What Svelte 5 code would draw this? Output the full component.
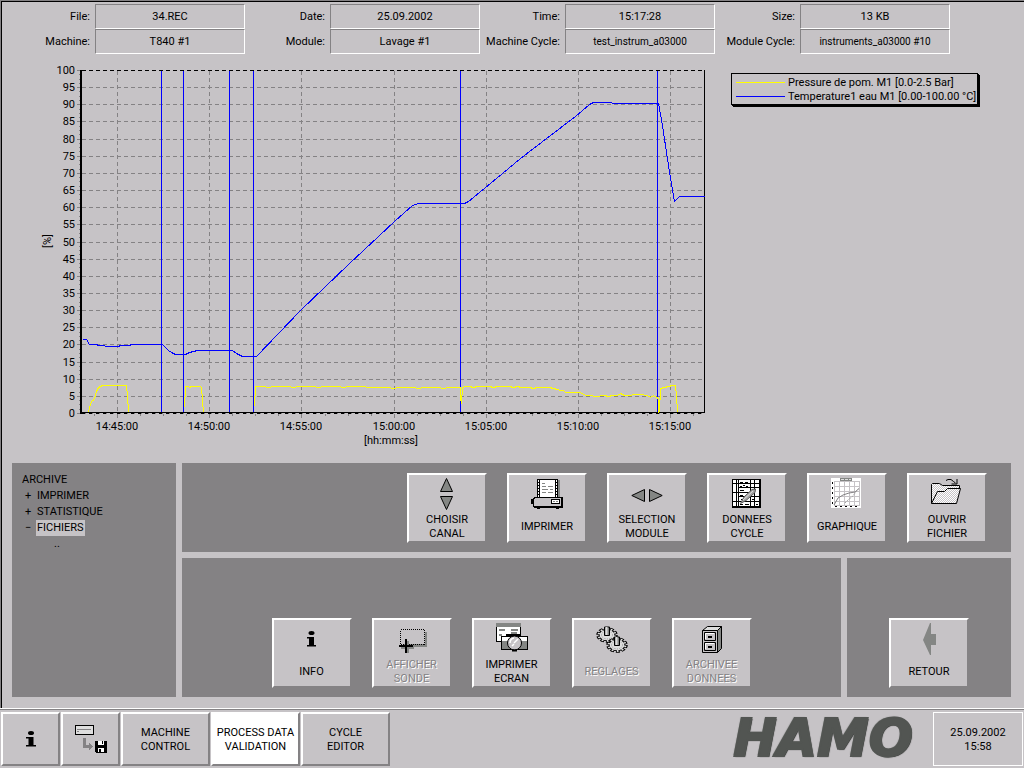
<script>
  const fields = [
    { id: 'file', label: 'File:', value: '34.REC' },
    { id: 'date', label: 'Date:', value: '25.09.2002' },
    { id: 'time', label: 'Time:', value: '15:17:28' },
    { id: 'size', label: 'Size:', value: '13 KB' },
    { id: 'machine', label: 'Machine:', value: 'T840 #1' },
    { id: 'module', label: 'Module:', value: 'Lavage #1' },
    { id: 'mcycle', label: 'Machine Cycle:', value: 'test_instrum_a03000', small: true },
    { id: 'modcycle', label: 'Module Cycle:', value: 'instruments_a03000 #10', small: true }
  ];

  const channels = [
    { color: '#ffff00', name: 'Pressure de pom. M1 [0.0-2.5 Bar]' },
    { color: '#0000ff', name: 'Temperature1 eau M1 [0.00-100.00 °C]' }
  ];

  // Percent scale: 0 % sits at y = 413, 100 % at y = 70.
  const yOf = (v) => Math.round(413 - v * 3.43) + 0.5;
  const percents = Array.from({ length: 21 }, (_, i) => i * 5);
  const minorPercents = Array.from({ length: 81 }, (_, i) => i * 1.25);
  const times = [
    ['14:45:00', 117], ['14:50:00', 209], ['14:55:00', 301], ['15:00:00', 394],
    ['15:05:00', 486], ['15:10:00', 578], ['15:15:00', 670]
  ];
  const minorTimes = Array.from({ length: 27 }, (_, i) => 94 + Math.round(i * 23.05));
  const phases = [161, 183, 229, 253, 460, 657];

  const temperature =
    '82,339 86,339 89,344 96,344 98,345 103,345 106,346 117,346 121,345 128,345 132,344 162,344 165,347 168,350 171,352 175,354 185,354 189,352 193,351 197,350 232,350 236,353 242,356 256,356 300,310 348,264 394,221 412,205 418,203 464,203 468,201 490,183 520,158 550,135 575,116 589,104 593,102 611,102 612,103 658,103 662,125 666,152 670,178 674,201 676,199 679,196 704,196';

  const jitter = (from, to, step, base) => {
    let out = '';
    for (let x = from, i = 0; x <= to; x += step, i++) out += `${x},${base(x) + (i % 5 === 2 ? 1 : 0)} `;
    return out;
  };
  const pressure = [
    '88,412 90,403 92,400 94,399 96,391 98,387 100,386 102,385 126,385 127,395 128,412',
    '184,407 185,386 188,386 189,387 191,386 200,386 201,387 202,400 203,412',
    '254,406 255,386 ' +
      jitter(258, 458, 5, (x) => (x < 370 ? 386 : 387)) +
      '460,387 460,398 461,403 462,387 ' +
      jitter(465, 553, 4, (x) => (x < 520 ? 386 : 387)) +
      '557,389 560,390 563,390 565,392 580,392 585,395 590,395 595,396 604,395 608,396 612,395 617,395 620,393 624,395 640,394 647,395 650,397 653,395 656,397 658,398 658,412',
    '659,412 660,388 664,387 668,386 672,385 675,385 676,395 677,412'
  ];

  const channelActions = [
    { icon: 'updown', lines: ['CHOISIR', 'CANAL'] },
    { icon: 'printer', lines: ['IMPRIMER'] },
    { icon: 'leftright', lines: ['SELECTION', 'MODULE'] },
    { icon: 'table', lines: ['DONNEES', 'CYCLE'] },
    { icon: 'graph', lines: ['GRAPHIQUE'] },
    { icon: 'folder', lines: ['OUVRIR', 'FICHIER'] }
  ];
  const toolActions = [
    { icon: 'info', lines: ['INFO'] },
    { icon: 'probe', lines: ['AFFICHER', 'SONDE'], disabled: true },
    { icon: 'camera', lines: ['IMPRIMER', 'ECRAN'] },
    { icon: 'gears', lines: ['REGLAGES'], disabled: true },
    { icon: 'cabinet', lines: ['ARCHIVEE', 'DONNEES'], disabled: true }
  ];
  const backActions = [{ icon: 'back', lines: ['RETOUR'] }];
</script>

{#snippet gear(cx, cy)}
  <g transform="translate({cx} {cy}) scale(1 .72)" fill="none">
    <circle r="8.500" stroke="#000" stroke-width="4.500" stroke-dasharray="3.6 1.74" />
    <circle r="8" fill="#dedede" stroke="#000" stroke-width="1.200" />
    <circle r="8.300" stroke="#dedede" stroke-width="2.500" stroke-dasharray="1.8 3.415" stroke-dashoffset="-.9" />
    <circle r="5.500" stroke="#848684" stroke-dasharray="1 1.5" />
  </g>
  <path d="M{cx - 2.5} {cy + 0.5}V{cy - 8}H{cx + 2.5}V{cy + 0.5}Z" fill="#848684" stroke="#000" />
  <path d="M{cx - 0.5} {cy}V{cy - 8}" stroke="#dedede" stroke-width="2" />
{/snippet}

{#snippet glyph(name)}
  <svg class="icon" viewBox="0 0 32 35" width="32" height="35" aria-hidden="true">
    {#if name === 'updown'}
      <g fill="#848684" stroke="#000">
        <path d="M15.5 1.5L21.5 14.5H9.5Z" />
        <path d="M15.5 32.5L21.5 19.5H9.5Z" />
      </g>
    {:else if name === 'leftright'}
      <g fill="#848684" stroke="#000">
        <path d="M.8 18.5L13.5 12.5V24.5Z" />
        <path d="M31.2 18.5L18.5 12.5V24.5Z" />
      </g>
    {:else if name === 'printer'}
      <g shape-rendering="crispEdges">
        <path d="M9 3H29V20H9Z" fill="#848684" />
        <path d="M6 2H27V20H6Z" fill="#000" />
        <path d="M9 3H24V20H9Z" fill="#fff" />
        <path d="M7.5 3V20M25.5 3V20" stroke="#fff" stroke-dasharray="2 1" />
        <path d="M11 6.5h3M11 9.5h4M17 9.5h5M11 12.5h6M19 12.5h3M11 15.5h4M17 15.5h5" stroke="#848684" fill="none" />
        <path d="M3 20H31L32 21V30L31 31H3L2 30V21Z" fill="#000" />
        <path d="M4 21H30V29H3V22Z" fill="#c6c3c6" />
        <path d="M0 22H2V27H0ZM6 31H9V32H6ZM25 31H28V32H25Z" fill="#000" />
        <path d="M20 22H29V27H20Z" fill="#000" />
        <path d="M21 23H28V26H21Z" fill="#fff" />
        <path d="M22 24.5h2M25 24.5h2" stroke="#848684" />
      </g>
    {:else if name === 'table'}
      <g shape-rendering="crispEdges">
        <path d="M1 2H30V31H1Z" fill="#000" />
        <path d="M2 3H5V29H2ZM6 3H7V29H6ZM8 3H19V29H8ZM20 3H23V29H20ZM24 3H28V29H24Z" fill="#fff" />
        <path d="M2 6.5H28M8 10.5H28M2 15.5H19M8 19.5H28M2 24.5H28" stroke="#000" />
        <path d="M9 5.5h3M14 5.5h3M9 9.5h2M12 8.5h2M15 9.5h2M9 13.5h4M9 18.5h3M10 22.5h2M9 27.5h3M14 27.5h4M21 22.5h2M25 27.5h2" stroke="#000" />
      </g>
      <path d="M9.500 26.500L13 20L21 12.500L24.500 12L24 15.500L15 23.500Z" fill="#a5a5a5" stroke="#5a5a5a" />
      <path d="M12 23L22 14" stroke="#dedede" />
    {:else if name === 'graph'}
      <g shape-rendering="crispEdges">
        <path d="M0 1H30V31H0Z" fill="#fff" />
        <path d="M3.500 4V29M8.500 4V29M13.500 4V29M18.500 4V29M23.500 4V29M28.500 4V29M3 4.500H29M3 9.500H29M3 14.500H29M3 19.500H29M3 24.500H29M3 28.500H29" stroke="#c6c3c6" />
        <path d="M1.500 5V29" stroke="#000" stroke-dasharray="2 3" />
        <path d="M4 29.500H29" stroke="#000" stroke-dasharray="2 3" />
        <path d="M9.500 1.500H20.500V3.500H9.500ZM13.500 1V3M17.500 1V3" stroke="#848684" fill="#dedede" />
      </g>
      <path d="M3 28L7 21L12 18L18 16L24 15L28 11.500" stroke="#848284" fill="none" />
      <path d="M14 26L18 22L21 20L28 11" stroke="#a5a5a5" stroke-dasharray="2 1" fill="none" />
    {:else if name === 'folder'}
      <defs>
        <pattern id="dither" width="2" height="2" patternUnits="userSpaceOnUse">
          <path d="M0 0h2v2h-2z" fill="#c6c3c6" />
          <path d="M0 0h1v1h-1zM1 1h1v1h-1z" fill="#fff" />
        </pattern>
      </defs>
      <path d="M.5 26.500V7.500L1.500 6.500H8.500L11.500 8.500H28.500V12" fill="url(#dither)" stroke="#000" />
      <path d="M.5 26.500L6.500 14.500H13.500L16.500 11.500H29.500L25.500 26.500Z" fill="url(#dither)" stroke="#000" />
      <path d="M15 3.500L17 2.500H20L22.500 4.500L24.500 6" fill="none" stroke="#000" />
      <path d="M26 2V7H20.500" fill="none" stroke="#000" />
    {:else if name === 'info'}
      <ellipse cx="15.500" cy="11" rx="3" ry="2" />
      <path d="M11 15H18V23H20V24.500H11V23H13V16.500H11Z" />
    {:else if name === 'probe'}
      <g shape-rendering="crispEdges">
        <path d="M7 10H31V25H7Z" fill="#848684" />
        <path d="M4 7H29V22H4Z" fill="#c6c3c6" />
        <path d="M4.500 7.500H28.500V22.500H4.500Z" fill="none" stroke="#000" stroke-dasharray="1 1" />
        <path d="M12 19V31M5 26H18" stroke="#848684" stroke-width="2" />
        <path d="M10 17V31M3 24H17" stroke="#000" stroke-width="2" />
      </g>
    {:else if name === 'camera'}
      <g shape-rendering="crispEdges">
        <path d="M0 1H25V20H0Z" fill="#000" />
        <path d="M1 5H24V19H1Z" fill="#fff" />
        <path d="M0 1H25V5H0Z" fill="#848684" />
        <path d="M3 8h6M15 8h7M3 13h3M15 11h6" stroke="#848684" stroke-width="2" />
        <path d="M5 14H10V12H24V14H32V28H5Z" fill="#000" />
        <path d="M6 15H31V19H6Z" fill="#fff" />
        <path d="M6 19H31V27H6Z" fill="#848684" />
      </g>
      <circle cx="18.500" cy="21" r="7" fill="#c6c3c6" stroke="#000" />
      <path d="M14 21A5 5 0 0 1 18 16M18 21L22 17M16 24L18 22" stroke="#fff" fill="none" stroke-width="1.500" />
      <path d="M16 28.500H21" stroke="#000" stroke-width="2" />
    {:else if name === 'gears'}
      {@render gear(11, 13)}
      {@render gear(21, 23)}
    {:else if name === 'cabinet'}
      <path d="M6.500 8.500L11.500 4.500H25.500L21.500 8.500Z" fill="#dedede" stroke="#000" />
      <path d="M21.500 8.500L25.500 4.500V26.500L21.500 30.500Z" fill="#848684" stroke="#000" />
      <path d="M6.500 8.500H21.500V30.500H6.500Z" fill="#c6c3c6" stroke="#000" />
      <path d="M8.500 10.500H19.500V18.500H8.500ZM8.500 20.500H19.500V28.500H8.500Z" fill="#c6c3c6" stroke="#000" />
      <path d="M9.500 17V11.500H18M9.500 27V21.500H18" fill="none" stroke="#fff" />
      <path d="M12 14H16V16H12ZM12 24H16V26H12Z" />
    {:else if name === 'back'}
      <path d="M10 18L17 1H18V12H23V23H18V33H17Z" fill="#848684" />
    {/if}
  </svg>
{/snippet}

{#snippet action(a)}
  <button class="action" type="button" disabled={a.disabled}>
    {@render glyph(a.icon)}
    <span class="caption">{#each a.lines as line}<span>{line}</span>{/each}</span>
  </button>
{/snippet}

<div class="page">
  <main>
    <header>
      {#each fields as f}
        <label for={f.id}>{f.label}</label>
        <output id={f.id} class:small={f.small}>{f.value}</output>
      {/each}
    </header>

    <section class="trend">
      <svg class="chart" viewBox="2 54 712 400" role="img" aria-label="Process trend">
        <g shape-rendering="crispEdges" fill="none">
          {#each percents as p}
            <path d="M82 {yOf(p)}H704" stroke="#848284" stroke-dasharray="4 3" />
            <path d="M77 {yOf(p)}H80" stroke="#848284" />
          {/each}
          {#each minorPercents as p}
            <path d="M79 {yOf(p)}H80" stroke="#848284" />
          {/each}
          {#each times as [, x]}
            <path d="M{x + 0.5} 71V412" stroke="#848284" stroke-dasharray="4 3" />
            <path d="M{x + 0.5} 414V418" stroke="#848284" />
          {/each}
          {#each minorTimes as x}
            <path d="M{x + 0.5} 414V416" stroke="#848284" />
          {/each}
          <path d="M82 70.500H704" stroke="#000" stroke-dasharray="4 3" />
          <path d="M81 70V414" stroke="#000" stroke-width="2" />
          <path d="M80 412.500H705" stroke="#000" />
          <path d="M82 413.500H705" stroke="#000" stroke-dasharray="3 4" />
          <path d="M704.500 70V413" stroke="#000" />
          {#each phases as x}
            <path d="M{x + 0.5} 71V412" stroke="#0000ff" />
          {/each}
          <g transform="translate(.5 .5)">
            {#each pressure as points}
              <polyline {points} stroke="#ffff00" />
            {/each}
            <polyline points={temperature} stroke="#0000ff" />
          </g>
        </g>
        {#each percents as p}
          <text x="75" y={yOf(p) + 3.5} text-anchor="end">{p}</text>
        {/each}
        {#each times as [t, x]}
          <text {x} y="430" text-anchor="middle">{t}</text>
        {/each}
        <text x="391" y="444" text-anchor="middle">[hh:mm:ss]</text>
        <text transform="translate(51 241) rotate(-90)" text-anchor="middle">[%]</text>
      </svg>
      <ul class="legend">
        {#each channels as c}
          <li><i style="background:{c.color}"></i>{c.name}</li>
        {/each}
      </ul>
    </section>

    <section class="panels">
      <nav class="tree" aria-label="Archive">
        <span>ARCHIVE</span>
        <ul>
          <li><span class="sign">+</span><button type="button">IMPRIMER</button></li>
          <li><span class="sign">+</span><button type="button">STATISTIQUE</button></li>
          <li><span class="sign">−</span><button type="button" class="selected">FICHIERS</button></li>
          <li class="parent"><button type="button">..</button></li>
        </ul>
      </nav>
      <div class="bar channel">{#each channelActions as a}{@render action(a)}{/each}</div>
      <div class="bar tools">{#each toolActions as a}{@render action(a)}{/each}</div>
      <div class="bar tools">{#each backActions as a}{@render action(a)}{/each}</div>
    </section>
  </main>

  <footer>
    <nav class="tabs" aria-label="Sections">
      <button type="button" aria-label="Info">
        <svg viewBox="0 0 12 18" width="12" height="18">
          <ellipse cx="6" cy="3" rx="3" ry="2" />
          <path d="M1 7H8.500V15H11V16.500H1V15H3.500V8.500H1Z" />
        </svg>
      </button>
      <button type="button" aria-label="Save to disk">
        <svg viewBox="0 0 34 30" width="34" height="30" shape-rendering="crispEdges">
          <path d="M1 1H20V11H1Z" />
          <path d="M2 2H19V10H2Z" fill="#dedede" />
          <path d="M3 5.500H17" stroke="#848284" />
          <path d="M3 7.500H5" stroke="#848284" />
          <path d="M9 14H12V21H15V18L19 22.500L15 27V24H9Z" fill="#848284" />
          <path d="M21 17H33V29H22L21 28Z" />
          <path d="M24 17H30V21H24ZM24 24H30V28H24Z" fill="#fff" />
          <path d="M28 17H29V20H28ZM25 25H27V28H25Z" />
        </svg>
      </button>
      <button type="button" class="wide"><span>MACHINE</span><span>CONTROL</span></button>
      <button type="button" class="wide current" aria-current="page"><span>PROCESS DATA</span><span>VALIDATION</span></button>
      <button type="button" class="wide"><span>CYCLE</span><span>EDITOR</span></button>
    </nav>
    <div class="brand">HAMO</div>
    <time datetime="2002-09-25T15:58"><span>25.09.2002</span><span>15:58</span></time>
  </footer>
</div>

<style>
  :global(body) {
    background: #c6c3c6;
  }
  .page {
    box-sizing: border-box;
    min-height: 100vh;
    display: flex;
    flex-direction: column;
    border-top: 1px solid #848284;
    background: #c6c3c6;
    color: #000;
    font: 11px/14px Roboto, 'Liberation Sans', sans-serif;
  }
  button {
    margin: 0;
    padding: 0;
    font: inherit;
    color: inherit;
    background: #c6c3c6;
    border-radius: 0;
  }
  ul {
    margin: 0;
    padding: 0;
    list-style: none;
  }
  main {
    flex: 1;
    display: flex;
    flex-direction: column;
    border-top: 1px solid #000;
    border-left: 1px solid #000;
    margin-left: 1px;
    box-shadow: -1px 0 #848284;
  }
  header {
    display: grid;
    grid-template-columns: repeat(4, minmax(85px, 85fr) minmax(120px, 150fr));
    grid-auto-rows: 25px;
    padding: 2px 74px 0 8px;
  }
  header label {
    padding: 6px 5px 0 0;
    text-align: right;
    white-space: nowrap;
  }
  output {
    box-sizing: border-box;
    border: 1px solid;
    border-color: #848284 #fff #fff #848284;
    padding-top: 5px;
    text-align: center;
  }
  .small {
    font-size: 10px;
  }
  .trend {
    display: flex;
    align-items: flex-start;
  }
  .chart {
    flex: 0 1 712px;
    min-width: 0;
    display: block;
  }
  .chart text {
    font-size: 11px;
  }
  .legend {
    flex: none;
    margin: 19px 0 0 17px;
    padding: 2px 1px 0 4px;
    border: 1px solid #000;
    box-shadow: 1px 1px #000, 2px 2px #000;
  }
  .legend li {
    display: flex;
    align-items: center;
    gap: 3px;
    white-space: nowrap;
  }
  .legend i {
    width: 49px;
    height: 1px;
    margin-bottom: 1px;
  }
  .panels {
    display: grid;
    grid-template-columns: 164px 659fr 164fr;
    gap: 6px;
    margin: 9px 13px 11px 10px;
  }
  .tree,
  .bar {
    background: #848284;
  }
  .tree {
    grid-row: span 2;
    padding: 9px 10px;
    line-height: 16px;
  }
  .tree li {
    display: flex;
    padding-left: 3px;
  }
  .tree .sign {
    width: 11px;
  }
  .tree button {
    border: 0;
    padding: 0 1px;
    background: none;
  }
  .tree .selected {
    background: #c6c3c6;
  }
  .tree .parent {
    padding-left: 31px;
  }
  .bar {
    display: flex;
    gap: 20px;
  }
  .channel {
    grid-column: 2 / 4;
    justify-content: flex-end;
    padding: 10px 24px 9px;
  }
  .tools {
    justify-content: center;
    padding: 60px 0 9px;
  }
  .action {
    box-sizing: border-box;
    width: 80px;
    height: 70px;
    display: flex;
    flex-direction: column;
    align-items: center;
    padding-top: 2px;
    border: 2px solid;
    border-color: #fff #848284 #848284 #fff;
  }
  .icon {
    flex: none;
  }
  .caption {
    flex: 1;
    display: flex;
    flex-direction: column;
    justify-content: center;
  }
  .action:disabled {
    color: #848284;
    text-shadow: 1px 1px #fff;
  }
  footer {
    display: flex;
    align-items: stretch;
    border-top: 1px solid #fff;
    box-shadow: inset 0 1px #848284;
    padding: 3px 1px 2px;
  }
  .tabs {
    display: flex;
    gap: 1px;
  }
  .tabs button {
    box-sizing: border-box;
    width: 59px;
    height: 54px;
    display: flex;
    flex-direction: column;
    align-items: center;
    justify-content: center;
    border: 2px solid;
    border-color: #fff #848284 #848284 #fff;
  }
  .tabs .wide {
    width: 89px;
    padding-top: 2px;
    white-space: nowrap;
  }
  .tabs .current {
    background: #fff;
  }
  .brand {
    margin-left: auto;
    margin-right: 20px;
    color: #525552;
    font: italic bold 52px/52px 'DejaVu Sans', sans-serif;
    -webkit-text-stroke: 2px #525552;
    text-shadow: 1px 1px 1px #212421, -1px -1px 1px #848684;
  }
  time {
    box-sizing: border-box;
    width: 90px;
    display: flex;
    flex-direction: column;
    align-items: center;
    justify-content: center;
    border: 1px solid #fff;
    padding-top: 2px;
  }
</style>
